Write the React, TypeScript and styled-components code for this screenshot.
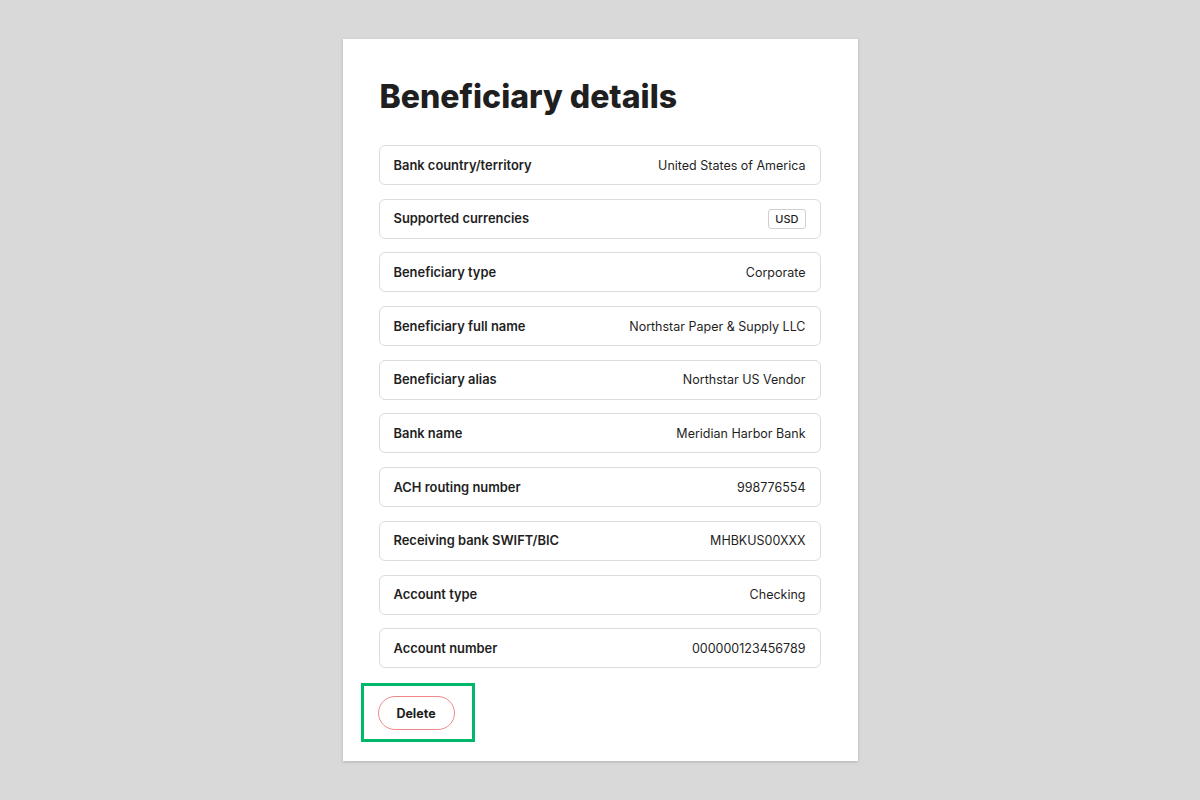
import React from "react";
import styled, { createGlobalStyle } from "styled-components";

const Global = createGlobalStyle`
  html, body { margin: 0; padding: 0; }
  body {
    background: #d9d9d9;
    font-family: Inter, "Noto Sans", "Liberation Sans", sans-serif;
    color: #1f1f1f;
  }
`;

const Page = styled.div`
  width: 1200px;
  height: 800px;
  display: flex;
  align-items: center;
  justify-content: center;
`;

const Card = styled.section`
  box-sizing: border-box;
  width: 515px;
  height: 722px;
  background: #ffffff;
  box-shadow: 0 1px 3px rgba(0, 0, 0, 0.18);
  padding: 38px 37px 19px 36px;
  display: flex;
  flex-direction: column;
`;

const Title = styled.h1`
  margin: 0 0 28px 1px;
  font-size: 32px;
  line-height: 40px;
  font-weight: 800;
  letter-spacing: 0;
  color: #1f1f1f;
`;

const List = styled.div`
  display: flex;
  flex-direction: column;
  gap: 13.7px;
`;

const Row = styled.div`
  box-sizing: border-box;
  height: 40px;
  border: 1px solid #dcdcdc;
  border-radius: 6px;
  padding: 0 14px;
  display: flex;
  align-items: center;
  justify-content: space-between;
  font-size: 12.5px;
`;

const Label = styled.span`
  font-size: 12.9px;
  font-weight: 600;
  color: #1f1f1f;
`;

const Value = styled.span`
  font-weight: 400;
  color: #1f1f1f;
`;

const Badge = styled.span`
  box-sizing: border-box;
  height: 20px;
  padding: 0 6px;
  border: 1px solid #cfcfcf;
  border-radius: 3px;
  font-size: 11px;
  font-weight: 500;
  display: inline-flex;
  align-items: center;
`;

const Focus = styled.div`
  box-sizing: border-box;
  margin: 15px 0 0 -18px;
  width: 114px;
  height: 60px;
  border: 3px solid #00b86b;
  padding: 10px 0 0 14px;
`;

const DeleteButton = styled.button`
  box-sizing: border-box;
  width: 77px;
  height: 34px;
  border: 1px solid #f08a8a;
  border-radius: 17px;
  background: #ffffff;
  font-family: inherit;
  font-size: 12.5px;
  font-weight: 700;
  color: #1f1f1f;
  cursor: pointer;
`;

const rows: { label: string; value: string; badge?: boolean }[] = [
  { label: "Bank country/territory", value: "United States of America" },
  { label: "Supported currencies", value: "USD", badge: true },
  { label: "Beneficiary type", value: "Corporate" },
  { label: "Beneficiary full name", value: "Northstar Paper & Supply LLC" },
  { label: "Beneficiary alias", value: "Northstar US Vendor" },
  { label: "Bank name", value: "Meridian Harbor Bank" },
  { label: "ACH routing number", value: "998776554" },
  { label: "Receiving bank SWIFT/BIC", value: "MHBKUS00XXX" },
  { label: "Account type", value: "Checking" },
  { label: "Account number", value: "000000123456789" },
];

export default function App() {
  return (
    <>
      <Global />
      <Page>
        <Card>
          <Title>Beneficiary details</Title>
          <List>
            {rows.map((r) => (
              <Row key={r.label}>
                <Label>{r.label}</Label>
                {r.badge ? <Badge>{r.value}</Badge> : <Value>{r.value}</Value>}
              </Row>
            ))}
          </List>
          <Focus>
            <DeleteButton>Delete</DeleteButton>
          </Focus>
        </Card>
      </Page>
    </>
  );
}
